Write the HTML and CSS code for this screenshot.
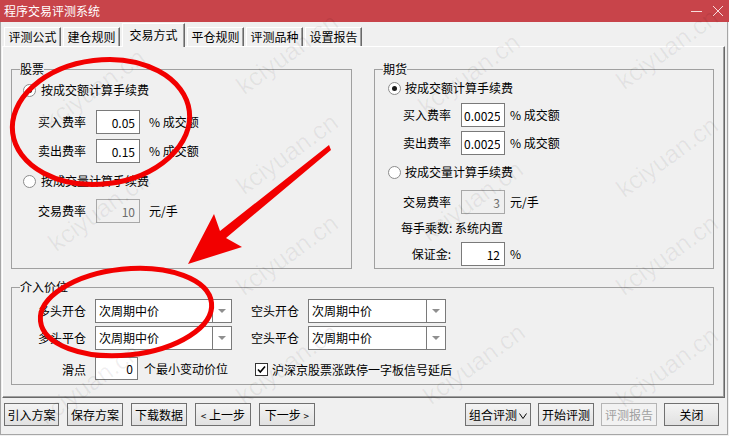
FILE: index.html
```html
<!DOCTYPE html>
<html lang="zh-CN">
<head>
  <meta charset="UTF-8">
  <title>程序交易评测系统</title>
  <link rel="stylesheet" href="styles.css">
</head>
<body>

  <!-- Title bar -->
  <div class="titlebar">
    <span class="title">程序交易评测系统</span>
    <div class="win-btns">
      <svg width="12" height="12" viewBox="0 0 12 12"><path d="M0 6.5h11" stroke="#f7dcdc" stroke-width="1"/></svg>
      <svg width="12" height="12" viewBox="0 0 12 12"><path d="M1 1l10 10M11 1L1 11" stroke="#f7dcdc" stroke-width="1"/></svg>
    </div>
  </div>

  <div class="frame">
    <!-- Tabs -->
    <div class="tabs">
      <div class="tab">评测公式</div>
      <div class="tab">建仓规则</div>
      <div class="tab active">交易方式</div>
      <div class="tab">平仓规则</div>
      <div class="tab">评测品种</div>
      <div class="tab">设置报告</div>
    </div>

    <div class="panel">
      <div class="top-groups">
        <!-- Stocks -->
        <fieldset class="group half">
          <legend>股票</legend>
          <div class="group-body stock">
            <div class="radio-row"><span class="radio checked"></span>按成交额计算手续费</div>
            <div class="field-row mt12">
              <span class="lbl">买入费率</span><input class="num" value="0.05" readonly><span class="unit">% 成交额</span>
            </div>
            <div class="field-row mt5">
              <span class="lbl">卖出费率</span><input class="num" value="0.15" readonly><span class="unit">% 成交额</span>
            </div>
            <div class="radio-row mt10"><span class="radio"></span>按成交量计算手续费</div>
            <div class="field-row mt10">
              <span class="lbl">交易费率</span><input class="num" value="10" disabled><span class="unit">元/手</span>
            </div>
          </div>
        </fieldset>

        <!-- Futures -->
        <fieldset class="group half futures-box">
          <legend>期货</legend>
          <div class="group-body futures">
            <div class="radio-row"><span class="radio checked"></span>按成交额计算手续费</div>
            <div class="field-row mt7">
              <span class="lbl">买入费率</span><input class="num" value="0.0025" readonly><span class="unit">% 成交额</span>
            </div>
            <div class="field-row mt4">
              <span class="lbl">卖出费率</span><input class="num" value="0.0025" readonly><span class="unit">% 成交额</span>
            </div>
            <div class="radio-row mt9"><span class="radio"></span>按成交量计算手续费</div>
            <div class="field-row mt10">
              <span class="lbl">交易费率</span><input class="num" value="3" disabled><span class="unit">元/手</span>
            </div>
            <div class="note mt6">每手乘数: 系统内置</div>
            <div class="field-row mt6">
              <span class="lbl right">保证金:</span><input class="num" value="12" readonly><span class="unit">%</span>
            </div>
          </div>
        </fieldset>
      </div>

      <!-- Entry price -->
      <fieldset class="group entry">
        <legend>介入价位</legend>
        <div class="entry-grid">
          <span class="glbl">多头开仓</span>
          <div class="combo"><span class="combo-text">次周期中价</span><span class="combo-arrow"><i></i></span></div>
          <span class="glbl left">空头开仓</span>
          <div class="combo wide"><span class="combo-text">次周期中价</span><span class="combo-arrow"><i></i></span></div>

          <span class="glbl">多头平仓</span>
          <div class="combo"><span class="combo-text">次周期中价</span><span class="combo-arrow"><i></i></span></div>
          <span class="glbl left">空头平仓</span>
          <div class="combo wide"><span class="combo-text">次周期中价</span><span class="combo-arrow"><i></i></span></div>

          <span class="glbl last">滑点</span>
          <div class="slip last"><input class="num small" value="0" readonly><span class="unit">个最小变动价位</span></div>
          <label class="check last">
            <span class="box"><svg width="11" height="11" viewBox="0 0 11 11"><path d="M2 5.5l2.3 2.5L9 2.5" fill="none" stroke="#000" stroke-width="1.6"/></svg></span>
            沪深京股票涨跌停一字板信号延后
          </label>
        </div>
      </fieldset>
    </div>

    <!-- Bottom buttons -->
    <div class="buttons">
      <div class="btn-group">
        <button class="btn">引入方案</button>
        <button class="btn">保存方案</button>
        <button class="btn">下载数据</button>
        <button class="btn"><small>&lt;</small>&nbsp;上一步</button>
        <button class="btn">下一步&nbsp;<small>&gt;</small></button>
      </div>
      <div class="btn-group">
        <button class="btn combo-btn">组合评测<svg width="8" height="6" viewBox="0 0 8 6"><path d="M0.5 0.5L4 5.5L7.5 0.5" fill="none" stroke="#000" stroke-width="1"/></svg></button>
        <button class="btn">开始评测</button>
        <button class="btn" disabled>评测报告</button>
        <button class="btn">关闭</button>
      </div>
    </div>
  </div>

  <!-- Watermark and red annotations drawn over the window -->
  <svg class="overlay" width="729" height="436" viewBox="0 0 729 436">
    <g class="wm">
      <text x="288" y="62" transform="rotate(-36 288 55)">kciyuan.cn</text>
      <text x="288" y="162" transform="rotate(-36 288 155)">kciyuan.cn</text>
      <text x="288" y="263" transform="rotate(-36 288 256)">kciyuan.cn</text>
      <text x="288" y="372" transform="rotate(-36 288 365)">kciyuan.cn</text>
      <text x="668" y="57" transform="rotate(-36 668 50)">kciyuan.cn</text>
      <text x="668" y="165" transform="rotate(-36 668 158)">kciyuan.cn</text>
      <text x="668" y="263" transform="rotate(-36 668 256)">kciyuan.cn</text>
      <text x="668" y="375" transform="rotate(-36 668 368)">kciyuan.cn</text>
      <text x="95" y="97" transform="rotate(-36 95 90)">kciyuan.cn</text>
      <text x="100" y="219" transform="rotate(-36 100 212)">kciyuan.cn</text>
      <text x="90" y="392" transform="rotate(-36 90 385)">kciyuan.cn</text>
      <text x="470" y="82" transform="rotate(-36 470 75)">kciyuan.cn</text>
      <text x="473" y="209" transform="rotate(-36 473 202)">kciyuan.cn</text>
      <text x="475" y="372" transform="rotate(-36 475 365)">kciyuan.cn</text>
    </g>
    <g class="mark">
      <ellipse cx="101" cy="122" rx="89" ry="62" transform="rotate(-7 101 122)"/>
      <ellipse cx="126" cy="312" rx="86" ry="43" transform="rotate(-6 126 312)"/>
      <polygon points="329,145 331,150 226,238 242,247 188,264 214,214 220,231"/>
    </g>
  </svg>

</body>
</html>
```

FILE: styles.css
```css
body {
  margin: 0;
  width: 729px;
  height: 436px;
  position: relative;
  overflow: hidden;
  background: #f0f0f0;
  font-family: "Noto Sans CJK SC", "Microsoft YaHei", sans-serif;
  font-size: 12px;
  line-height: 16px;
  color: #000;
}

/* title bar */
.titlebar {
  height: 22px;
  background: #c8444a;
  color: #fff;
  display: flex;
  align-items: center;
  justify-content: space-between;
  padding: 0 5px 0 4px;
}

.win-btns {
  display: flex;
  align-items: center;
  gap: 9px;
}

/* window body */
.frame {
  width: 728px;
  height: 413px;
  box-sizing: border-box;
  border: 1px solid #a6a6a6;
  border-top: none;
  padding: 1px 0 0 1px;
}

.tabs {
  display: flex;
  align-items: flex-end;
  gap: 2px;
  height: 23px;
  margin-left: 2px;
}

.tab {
  width: 57px;
  height: 19px;
  box-sizing: border-box;
  border-top: 1px solid #fff;
  border-left: 1px solid #fff;
  border-right: 1px solid #696969;
  box-shadow: inset -1px 0 #a0a0a0;
  text-align: center;
  line-height: 18px;
}

.tab.active {
  width: 63px;
  height: 24px;
  margin-bottom: -1px;
  position: relative;
  z-index: 1;
  background: #f0f0f0;
  line-height: 22px;
}

.panel {
  width: 723px;
  height: 352px;
  box-sizing: border-box;
  border: 1px solid #fff;
  border-right-color: #696969;
  border-bottom-color: #696969;
  box-shadow: inset -1px -1px #a0a0a0;
  padding: 14px 0 0 8px;
}

/* group boxes */
.top-groups {
  display: flex;
  gap: 22px;
}

.group {
  margin: 0;
  padding: 0;
  min-width: 0;
  box-sizing: border-box;
  border: 1px solid #a0a0a0;
}

.group legend {
  margin-left: 8px;
  padding: 0;
  line-height: 16px;
}

.half {
  width: 341px;
  height: 208px;
}

.futures-box {
  width: 340px;
}

.stock {
  padding: 5px 0 0 11px;
}

.futures {
  padding: 3px 0 0 13px;
}

.radio-row {
  display: flex;
  align-items: center;
  height: 16px;
}

.radio {
  width: 13px;
  height: 13px;
  box-sizing: border-box;
  border: 1px solid #8c8c8c;
  border-radius: 50%;
  background: #fff;
  margin-right: 5px;
  display: flex;
  align-items: center;
  justify-content: center;
}

.futures .radio {
  margin-right: 4px;
}

.radio.checked::after {
  content: '';
  width: 5px;
  height: 5px;
  border-radius: 50%;
  background: #1a1a1a;
}

.field-row {
  display: flex;
  align-items: center;
  height: 24px;
  padding-left: 15px;
}

.lbl {
  width: 48px;
  margin-right: 10px;
}

.lbl.right {
  text-align: right;
}

.num {
  width: 44px;
  height: 24px;
  box-sizing: border-box;
  border: 1px solid #7a7a7a;
  background: #fff;
  font: inherit;
  color: #000;
  text-align: right;
  padding: 0 4px 0 2px;
  margin: 0;
  outline: none;
}

.num:disabled {
  background: #f0f0f0;
  border-color: #a8a8a8;
  color: #6d6d6d;
}

.num.small {
  width: 43px;
  height: 23px;
}

.unit {
  margin-left: 9px;
}

.futures .unit {
  margin-left: 5px;
}

.note {
  height: 16px;
  padding-left: 13px;
}

.mt4 { margin-top: 4px; }
.mt5 { margin-top: 5px; }
.mt6 { margin-top: 6px; }
.mt7 { margin-top: 7px; }
.mt9 { margin-top: 9px; }
.mt10 { margin-top: 10px; }
.mt12 { margin-top: 12px; }

/* entry price group */
.entry {
  width: 703px;
  height: 106px;
  margin-top: 10px;
}

.entry-grid {
  display: grid;
  grid-template-columns: 57px 156px 57px 138px;
  grid-template-rows: 24px 24px 27px;
  row-gap: 3px;
  align-items: center;
  padding: 4px 0 0 26px;
}

.glbl {
  text-align: right;
  padding-right: 9px;
}

.glbl.left {
  text-align: left;
}

.last {
  align-self: end;
}

.glbl.last {
  line-height: 21px;
}

.combo {
  display: flex;
  width: 137px;
  height: 24px;
  box-sizing: border-box;
  border: 1px solid #7a7a7a;
  background: #fff;
}

.combo.wide {
  width: 138px;
}

.combo-text {
  flex: 1;
  padding-left: 3px;
  line-height: 22px;
}

.combo-arrow {
  width: 18px;
  border-left: 1px solid #7a7a7a;
  display: flex;
  align-items: center;
  justify-content: center;
}

.combo-arrow i {
  width: 0;
  height: 0;
  border-left: 4px solid transparent;
  border-right: 4px solid transparent;
  border-top: 4px solid #8f8f8f;
}

.slip {
  display: flex;
  align-items: center;
}

.slip .unit {
  margin-left: 6px;
}

.check {
  grid-column: 3 / 5;
  display: flex;
  align-items: center;
  height: 21px;
  margin-left: 4px;
  white-space: nowrap;
}

.box {
  width: 13px;
  height: 13px;
  box-sizing: border-box;
  border: 1px solid #333;
  background: #fff;
  margin-right: 4px;
  display: flex;
  align-items: center;
  justify-content: center;
}

/* buttons */
.buttons {
  display: flex;
  justify-content: space-between;
  margin-top: 5px;
  padding: 0 8px 0 2px;
}

.btn-group {
  display: flex;
  gap: 8px;
}

.btn-group + .btn-group {
  gap: 7px;
}

.btn {
  width: 55px;
  height: 23px;
  box-sizing: border-box;
  border: 1px solid #707070;
  background: linear-gradient(#f4f4f4, #e1e1e1);
  font: inherit;
  line-height: 21px;
  color: #000;
  padding: 0;
  text-align: center;
  white-space: nowrap;
}

.btn small {
  font-size: 10px;
}

.btn + .btn {
  width: 56px;
}

.btn-group .btn:last-child {
  width: 55px;
}

.btn-group:first-child .btn:last-child {
  width: 56px;
}

.btn.combo-btn {
  width: 66px;
}

.combo-btn svg {
  margin-left: 2px;
  vertical-align: 1px;
}

.btn:disabled {
  border-color: #b5b5b5;
  background: #f2f2f2;
  color: #a0a0a0;
}

/* overlay */
.overlay {
  position: absolute;
  top: 0;
  left: 0;
  pointer-events: none;
}

.wm text {
  font-family: "Liberation Sans", sans-serif;
  font-size: 25px;
  fill: #000;
  fill-opacity: 0.06;
  text-anchor: middle;
}

.mark ellipse {
  fill: none;
  stroke: #f20000;
  stroke-width: 5;
}

.mark polygon {
  fill: #f20000;
}
```
